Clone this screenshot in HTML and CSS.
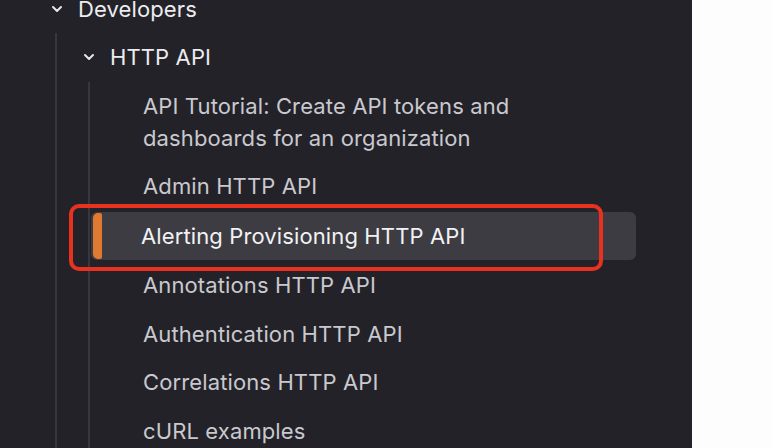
FILE: index.html
```html
<!DOCTYPE html>
<html>
<head>
<meta charset="utf-8">
<link rel="stylesheet" href="styles.css">
</head>
<body>
<div class="page">
  <nav class="sidebar">
    <div class="tree">
      <div class="row lvl0">
        <span class="toggle"><svg width="12" height="8" viewBox="0 0 12 8"><path d="M2 2l4 4 4-4" fill="none" stroke="#e6e6ea" stroke-width="2" stroke-linecap="round" stroke-linejoin="round"/></svg></span>
        <span class="label strong">Developers</span>
      </div>
      <div class="children c0">
        <div class="row lvl1">
          <span class="toggle"><svg width="12" height="8" viewBox="0 0 12 8"><path d="M2 2l4 4 4-4" fill="none" stroke="#e6e6ea" stroke-width="2" stroke-linecap="round" stroke-linejoin="round"/></svg></span>
          <span class="label strong">HTTP API</span>
        </div>
        <div class="children c1">
          <div class="item">API Tutorial: Create API tokens and<br>dashboards for an organization</div>
          <div class="item">Admin HTTP API</div>
          <div class="item active"><span class="bar"></span>Alerting Provisioning HTTP API<span class="annot"></span></div>
          <div class="item">Annotations HTTP API</div>
          <div class="item">Authentication HTTP API</div>
          <div class="item">Correlations HTTP API</div>
          <div class="item">cURL examples</div>
        </div>
      </div>
    </div>
  </nav>
  <div class="content"></div>
</div>
</body>
</html>
```
FILE: styles.css
```css
* { box-sizing: border-box; }
html, body { margin: 0; padding: 0; }
body {
  font-family: Inter, "Noto Sans", sans-serif;
  background: #ffffff;
  width: 772px;
  height: 448px;
  overflow: hidden;
}
.page {
  display: flex;
  height: 448px;
}
.sidebar {
  width: 692px;
  flex: none;
  background: #232229;
  overflow: hidden;
  height: 448px;
}
.content {
  flex: 1;
  background: #fdfdfd;
}
.tree {
  margin-top: -15px;
  font-size: 22px;
  line-height: 32px;
  letter-spacing: 0.12px;
}
.row {
  display: flex;
  align-items: center;
  padding: 8px 0;
}
.toggle {
  width: 22px;
  height: 32px;
  display: flex;
  align-items: center;
  justify-content: center;
  flex: none;
}
.label { margin-left: 10px; }
.strong { color: #ececef; }
.lvl0 { padding-left: 46px; }
.c0 {
  margin-left: 55px;
  border-left: 2px solid #38373e;
}
.lvl1 { padding: 8px 0 9px 21px; }
.c1 {
  margin-left: 31px;
  border-left: 2px solid #38373e;
  padding-bottom: 40px;
}
.item {
  color: #c9c9ce;
  padding: 8px 0 8px 52px;
  margin-left: 1px;
}
.active ~ .item {
  padding-bottom: 8.7px;
}
.item.active {
  position: relative;
  margin: 2px 56px 1px 1px;
  padding: 8px 0 8px 50px;
  background: #3d3c42;
  border-radius: 6px;
  color: #f2f2f4;
}
.bar {
  position: absolute;
  left: 2px;
  top: 1px;
  bottom: 1px;
  width: 9px;
  background: #df7a30;
  border-radius: 5px 2px 2px 5px;
}
.annot {
  position: absolute;
  left: -22px;
  top: -8px;
  width: 534px;
  height: 67px;
  border: 4px solid #e8321f;
  border-radius: 10px;
}
```
